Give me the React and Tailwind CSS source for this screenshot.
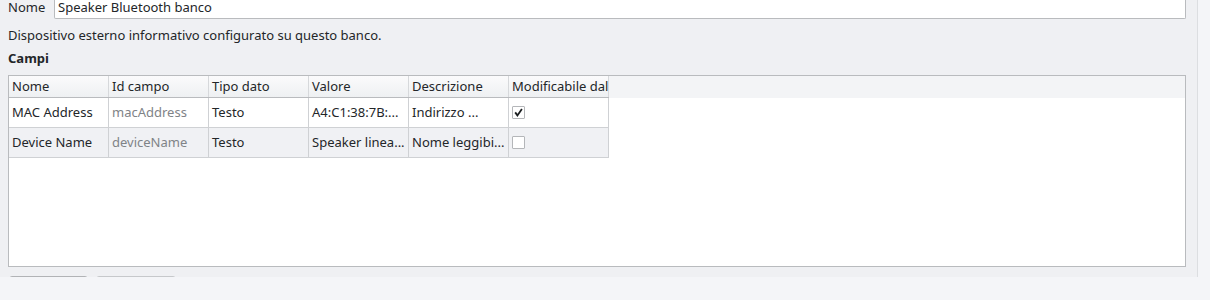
const COLS = ['Nome', 'Id campo', 'Tipo dato', 'Valore', 'Descrizione', 'Modificabile dal']

const ROWS = [
  { nome: 'MAC Address', id: 'macAddress', tipo: 'Testo', valore: 'A4:C1:38:7B:...', desc: 'Indirizzo ...', edit: true },
  { nome: 'Device Name', id: 'deviceName', tipo: 'Testo', valore: 'Speaker linea...', desc: 'Nome leggibi...', edit: false },
]

function Check({ on }) {
  return (
    <span className="w-[13px] h-[13px] border border-[#b4b6b9] bg-white flex items-center justify-center rounded-[1px]">
      {on && (
        <svg width="9" height="9" viewBox="0 0 9 9">
          <path d="M1.2 4.4 L3.4 7.4 L7.9 1" fill="none" stroke="#1b1e20" strokeWidth="1.8" />
        </svg>
      )}
    </span>
  )
}

function Cell({ children, className = '' }) {
  return (
    <div className={`w-[100px] shrink-0 border-r border-[#cfd1d4] pl-[3px] flex items-center overflow-hidden whitespace-nowrap ${className}`}>
      {children}
    </div>
  )
}

export default function App() {
  return (
    <div className="w-[1210px] h-[300px] bg-[#f4f5f8] text-[13px] text-[#232629] font-['Noto_Sans',sans-serif] overflow-hidden">
      <div className="flex h-[277px]">
        {/* left form panel */}
        <div className="w-[1198px] bg-[#eff0f3] border-r border-[#dcdee1] pl-[8px] pr-[11px] overflow-hidden">
          <div className="flex items-start h-[19px]">
            <span className="w-[46px] leading-[15px]">Nome</span>
            <div className="flex-1 h-[19px] bg-white border border-t-0 border-[#b9bbbe] rounded-b-[2px] px-[3px] leading-[15px]">
              Speaker Bluetooth banco
            </div>
          </div>
          <div className="mt-[7px] h-[18px] leading-[18px]">
            Dispositivo esterno informativo configurato su questo banco.
          </div>
          <div className="mt-[5px] h-[18px] leading-[18px] font-bold">Campi</div>

          {/* table */}
          <div className="mt-[8px] h-[192px] border border-[#b9bbbe] bg-white">
            <div className="flex h-[22px] bg-[#f3f4f6]">
              <div className="flex border-b border-[#b9bbbe] bg-[linear-gradient(#fbfbfc,#eef0f2)]">
                {COLS.map((c) => (
                  <Cell key={c} className="border-[#d6d8db]">{c}</Cell>
                ))}
              </div>
            </div>
            {ROWS.map((r, i) => (
              <div key={r.id} className={`flex w-[600px] h-[30px] border-b border-[#cfd1d4] ${i % 2 ? 'bg-[#f0f1f4]' : 'bg-white'}`}>
                <Cell>{r.nome}</Cell>
                <Cell className="text-[#7f8387]">{r.id}</Cell>
                <Cell>{r.tipo}</Cell>
                <Cell>{r.valore}</Cell>
                <Cell>{r.desc}</Cell>
                <Cell><Check on={r.edit} /></Cell>
              </div>
            ))}
          </div>

          {/* buttons (cut off) */}
          <div className="flex gap-[8px] mt-[9px] ml-[1px]">
            <div className="w-[79px] h-[24px] border border-[#b1b3b6] rounded-[3px] bg-[#f6f7f8]" />
            <div className="w-[80px] h-[24px] border border-[#c6c8cb] rounded-[3px] bg-[#f6f7f8]" />
          </div>
        </div>
      </div>
    </div>
  )
}
